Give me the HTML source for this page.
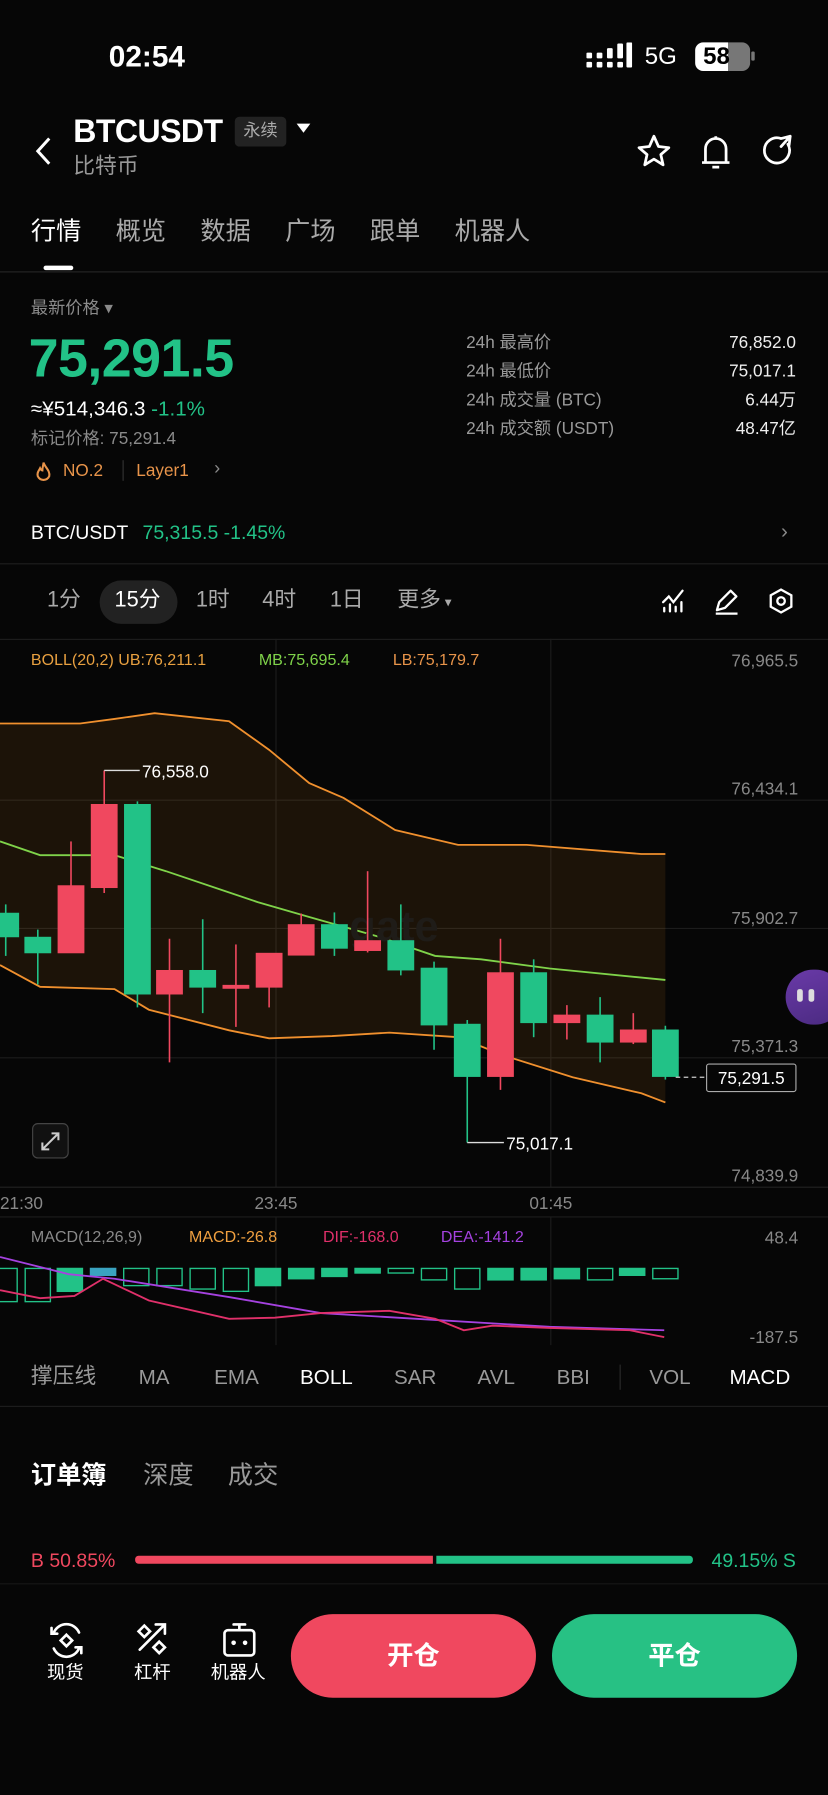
<!DOCTYPE html>
<html><head><meta charset="utf-8"><style>
*{margin:0;padding:0;box-sizing:border-box}
html,body{width:828px;height:1795px;background:#060606;overflow:hidden}
#w{position:absolute;left:0;top:0;width:723px;height:1568px;transform:scale(1.14523,1.1448);transform-origin:0 0;font-family:"Liberation Sans","Noto Sans CJK SC",sans-serif;color:#fff}
.a{position:absolute;white-space:nowrap;line-height:1}
.g{color:#8a8a8a}.gr{color:#22c287}.rd{color:#f0485f}.or{color:#e8944a}
.hl{position:absolute;left:0;width:723px;height:1px;background:#1e1e1e}
</style></head><body><div id="w">
<div class="a" style="left:95px;top:36px;font-size:26px;font-weight:bold">02:54</div>
<svg class="a" style="left:512px;top:37px" width="40" height="24"><g fill="#fff"><rect x="0" y="9" width="5" height="5" rx="1"/><rect x="0" y="17" width="5" height="5" rx="1"/><rect x="9" y="9" width="5" height="5" rx="1"/><rect x="9" y="17" width="5" height="5" rx="1"/><rect x="18" y="5" width="5" height="9" rx="1"/><rect x="18" y="17" width="5" height="5" rx="1"/><rect x="27" y="1" width="5" height="13" rx="1"/><rect x="27" y="17" width="5" height="5" rx="1"/><rect x="35" y="0" width="5" height="22" rx="1"/></g></svg>
<div class="a" style="left:563px;top:39px;font-size:21px">5G</div>
<div class="a" style="left:607px;top:37px;width:48px;height:25px;border-radius:7px;background:linear-gradient(90deg,#fff 0 60%,#777 60%)"></div>
<div class="a" style="left:614px;top:39px;font-size:21px;font-weight:bold;color:#000">58</div>
<div class="a" style="left:656px;top:45px;width:3px;height:8px;background:#777;border-radius:1px"></div>
<svg class="a" style="left:28px;top:118px" width="20" height="28"><path d="M15 3 L5 14 L15 25" stroke="#fff" stroke-width="2.6" fill="none"/></svg>
<div class="a" style="left:64px;top:101px;font-size:28px;font-weight:bold;letter-spacing:-0.5px">BTCUSDT</div>
<div class="a" style="left:205px;top:102px;width:45px;height:26px;background:#222;border-radius:4px;font-size:15px;color:#aaa;text-align:center;line-height:26px">永续</div>
<div class="a" style="left:259px;top:108px;border:6px solid transparent;border-top:8px solid #fff;border-bottom:0"></div>
<div class="a g" style="left:64px;top:136px;font-size:19px;color:#999">比特币</div>
<svg class="a" style="left:556px;top:116px" width="140" height="32"><path d="M15 3 L19 12 L28 13 L21 19 L23 28 L15 23 L7 28 L9 19 L2 13 L11 12Z" stroke="#fff" stroke-width="2.4" fill="none" stroke-linejoin="round"/><path d="M60 26 V14 a9 9 0 0 1 18 0 V26 Z M57 26 H81 M66 30 H72 M69 3 V5" stroke="#fff" stroke-width="2.4" fill="none" stroke-linejoin="round"/><path d="M132 10 A11 11 0 1 1 126 5 M126 5 L134 3 M134 3 L133 11 M134 3 L126 12" stroke="#fff" stroke-width="2.4" fill="none" stroke-linecap="round"/></svg>
<div class="a" style="left:27px;top:191px;font-size:22px">行情</div>
<div class="a g" style="left:101px;top:191px;font-size:22px;color:#aaa">概览</div>
<div class="a" style="left:175px;top:191px;font-size:22px;color:#aaa">数据</div>
<div class="a" style="left:249px;top:191px;font-size:22px;color:#aaa">广场</div>
<div class="a" style="left:323px;top:191px;font-size:22px;color:#aaa">跟单</div>
<div class="a" style="left:397px;top:191px;font-size:22px;color:#aaa">机器人</div>
<div class="a" style="left:38px;top:232px;width:26px;height:4px;background:#fff;border-radius:2px"></div>
<div class="hl" style="top:237px;background:#262626"></div>
<div class="a g" style="left:27px;top:262px;font-size:15px">最新价格 ▾</div>
<div class="a gr" style="left:25px;top:289px;font-size:47px;font-weight:bold;letter-spacing:-0.5px">75,291.5</div>
<div class="a" style="left:27px;top:348px;font-size:18px">≈¥514,346.3 <span class="gr">-1.1%</span></div>
<div class="a g" style="left:27px;top:376px;font-size:15px">标记价格: 75,291.4</div>
<svg class="a" style="left:30px;top:402px" width="16" height="20"><path d="M8 2 C9 6 14 9 13 14 A5.5 5.5 0 0 1 3 14 C2 11 4 9 5 7 C6 9 7 9 7 9 C7 6 8 4 8 2Z" stroke="#e8944a" stroke-width="1.8" fill="none"/></svg>
<div class="a or" style="left:55px;top:404px;font-size:15px">NO.2</div>
<div class="a" style="left:107px;top:402px;width:1px;height:18px;background:#333"></div>
<div class="a or" style="left:119px;top:404px;font-size:15px">Layer1</div>
<div class="a g" style="left:187px;top:402px;font-size:16px">›</div>
<div class="a g" style="left:407px;top:287px;font-size:15px;line-height:25px;color:#999">24h 最高价<br>24h 最低价<br>24h 成交量 (BTC)<br>24h 成交额 (USDT)</div>
<div class="a" style="right:28px;top:287px;font-size:15px;line-height:25px;text-align:right;color:#eee">76,852.0<br>75,017.1<br>6.44万<br>48.47亿</div>
<div class="a" style="left:27px;top:457px;font-size:17px">BTC/USDT <span class="gr" style="margin-left:8px">75,315.5 -1.45%</span></div>
<div class="a g" style="left:682px;top:455px;font-size:18px">›</div>
<div class="hl" style="top:492px"></div>
<div class="a" style="left:87px;top:507px;width:68px;height:38px;border-radius:19px;background:#222"></div>
<div class="a" style="left:41px;top:515px;font-size:19px;color:#aaa">1分</div>
<div class="a" style="left:100px;top:515px;font-size:19px">15分</div>
<div class="a" style="left:171px;top:515px;font-size:19px;color:#aaa">1时</div>
<div class="a" style="left:229px;top:515px;font-size:19px;color:#aaa">4时</div>
<div class="a" style="left:288px;top:515px;font-size:19px;color:#aaa">1日</div>
<div class="a" style="left:347px;top:515px;font-size:19px;color:#aaa">更多<span style="font-size:12px"> ▾</span></div>
<svg class="a" style="left:576px;top:512px" width="120" height="28"><path d="M3 14 L8 9 L12 14 L20 4 M4 22 V19 M9 22 V16 M14 22 V18 M19 22 V14" stroke="#fff" stroke-width="2" fill="none" stroke-linecap="round"/><path d="M50 21 L52 14 L62 4 L67 9 L57 19 Z M49 24 H68" stroke="#fff" stroke-width="2" fill="none" stroke-linejoin="round"/><path d="M106 3 L115 8 V18 L106 23 L97 18 V8 Z" stroke="#fff" stroke-width="2" fill="none"/><circle cx="106" cy="13" r="3.3" stroke="#fff" stroke-width="2" fill="none"/></svg>
<div class="hl" style="top:558px"></div>
<svg class="a" style="left:0;top:558px" width="723" height="620" viewBox="0 558 723 620">
<g stroke="#1c1c1c" stroke-width="1"><line x1="0" y1="699" x2="723" y2="699"/><line x1="0" y1="811" x2="723" y2="811"/><line x1="0" y1="924" x2="723" y2="924"/><line x1="241" y1="558" x2="241" y2="1037"/><line x1="481" y1="558" x2="481" y2="1037"/><line x1="241" y1="1063" x2="241" y2="1175"/><line x1="481" y1="1063" x2="481" y2="1175"/></g>
<line x1="0" y1="1037" x2="723" y2="1037" stroke="#222"/>
<line x1="0" y1="1063" x2="723" y2="1063" stroke="#1c1c1c"/>
<path d="M0 632 L70 632 L100 628 L135 623 L200 630 L235 655 L270 684 L300 697 L345 725 L400 738 L460 738 L560 746 L581 746 L581 963 L560 955 L500 941 L440 922 L400 906 L340 902 L290 905 L235 907 L200 900 L130 882 L100 864 L35 862 L0 843 Z" fill="rgba(255,150,30,0.09)"/>
<path d="M0 632 L70 632 L100 628 L135 623 L200 630 L235 655 L270 684 L300 697 L345 725 L400 738 L460 738 L560 746 L581 746" stroke="#f0902e" stroke-width="1.6" fill="none"/>
<path d="M0 735 L35 747 L100 747 L145 761 L225 788 L270 801 L330 818 L380 835 L420 838 L480 846 L581 856" stroke="#7fd34a" stroke-width="1.6" fill="none"/>
<path d="M0 843 L35 862 L100 864 L130 882 L200 900 L235 907 L290 905 L340 902 L400 906 L440 922 L500 941 L560 955 L581 963" stroke="#f0902e" stroke-width="1.6" fill="none"/>
<text x="305" y="822" font-size="38" font-weight="bold" fill="#1f1c18" font-family="Liberation Sans">gate</text>
<g stroke-width="1.4">
<g fill="#22c287" stroke="#22c287"><line x1="5" y1="790" x2="5" y2="835"/><rect x="-6" y="798" width="22" height="20"/>
<line x1="33" y1="812" x2="33" y2="860"/><rect x="22" y="819" width="22" height="13"/>
<line x1="120" y1="700" x2="120" y2="880"/><rect x="109" y="703" width="22" height="165"/>
<line x1="177" y1="803" x2="177" y2="885"/><rect x="166" y="848" width="22" height="14"/>
<line x1="292" y1="797" x2="292" y2="835"/><rect x="281" y="808" width="22" height="20"/>
<line x1="350" y1="790" x2="350" y2="852"/><rect x="339" y="822" width="22" height="25"/>
<line x1="379" y1="840" x2="379" y2="917"/><rect x="368" y="846" width="22" height="49"/>
<line x1="408" y1="891" x2="408" y2="998"/><rect x="397" y="895" width="22" height="45"/>
<line x1="466" y1="838" x2="466" y2="906"/><rect x="455" y="850" width="22" height="43"/>
<line x1="524" y1="871" x2="524" y2="928"/><rect x="513" y="887" width="22" height="23"/>
<line x1="581" y1="896" x2="581" y2="943"/><rect x="570" y="900" width="22" height="40"/></g>
<g fill="#f0485f" stroke="#f0485f"><line x1="62" y1="735" x2="62" y2="832"/><rect x="51" y="774" width="22" height="58"/>
<line x1="91" y1="673" x2="91" y2="780"/><rect x="80" y="703" width="22" height="72"/>
<line x1="148" y1="820" x2="148" y2="928"/><rect x="137" y="848" width="22" height="20"/>
<line x1="206" y1="825" x2="206" y2="897"/><rect x="195" y="861" width="22" height="2"/>
<line x1="235" y1="833" x2="235" y2="880"/><rect x="224" y="833" width="22" height="29"/>
<line x1="263" y1="798" x2="263" y2="834"/><rect x="252" y="808" width="22" height="26"/>
<line x1="321" y1="761" x2="321" y2="832"/><rect x="310" y="822" width="22" height="8"/>
<line x1="437" y1="820" x2="437" y2="952"/><rect x="426" y="850" width="22" height="90"/>
<line x1="495" y1="878" x2="495" y2="908"/><rect x="484" y="887" width="22" height="6"/>
<line x1="553" y1="885" x2="553" y2="912"/><rect x="542" y="900" width="22" height="10"/></g></g>
<path d="M91 673 H122 M408 998 H440" stroke="#ddd" stroke-width="1.2"/>
<text x="124" y="679" font-size="15" fill="#fff" font-family="Liberation Sans">76,558.0</text>
<text x="442" y="1004" font-size="15" fill="#fff" font-family="Liberation Sans">75,017.1</text>
<line x1="590" y1="941" x2="616" y2="941" stroke="#ccc" stroke-dasharray="4 3"/>
<rect x="617" y="929.5" width="78" height="24" rx="2" fill="#060606" stroke="#aaa"/>
<text x="656" y="947" font-size="15" fill="#fff" text-anchor="middle" font-family="Liberation Sans">75,291.5</text>
<g fill="#888" font-size="15" font-family="Liberation Sans" text-anchor="end"><text x="697" y="582">76,965.5</text><text x="697" y="694">76,434.1</text><text x="697" y="807">75,902.7</text><text x="697" y="919">75,371.3</text><text x="697" y="1032">74,839.9</text><text x="697" y="1086">48.4</text><text x="697" y="1173">-187.5</text></g>
<g fill="#888" font-size="15" font-family="Liberation Sans"><text x="0" y="1056">21:30</text><text x="241" y="1056" text-anchor="middle">23:45</text><text x="481" y="1056" text-anchor="middle">01:45</text></g>
<g stroke="#22c287" stroke-width="1.2"><g fill="none"><rect x="-7" y="1108" width="22" height="29"/><rect x="22" y="1108" width="22" height="29"/><rect x="108" y="1108" width="22" height="15"/><rect x="137" y="1108" width="22" height="15"/><rect x="166" y="1108" width="22" height="18"/><rect x="195" y="1108" width="22" height="20"/><rect x="339" y="1108" width="22" height="4"/><rect x="368" y="1108" width="22" height="10"/><rect x="397" y="1108" width="22" height="18"/><rect x="513" y="1108" width="22" height="10"/><rect x="570" y="1108" width="22" height="9"/></g>
<g fill="#22c287"><rect x="50" y="1108" width="22" height="20"/><rect x="79" y="1108" width="22" height="6" fill="#3aa3c0" stroke="#3aa3c0"/><rect x="223" y="1108" width="22" height="15"/><rect x="252" y="1108" width="22" height="9"/><rect x="281" y="1108" width="22" height="7"/><rect x="310" y="1108" width="22" height="4"/><rect x="426" y="1108" width="22" height="10"/><rect x="455" y="1108" width="22" height="10"/><rect x="484" y="1108" width="22" height="9"/><rect x="541" y="1108" width="22" height="6"/></g></g>
<path d="M0 1098 L60 1113 L100 1117 L200 1133 L280 1147 L380 1153 L480 1159 L580 1162" stroke="#a542e0" stroke-width="1.6" fill="none"/>
<path d="M0 1127 L35 1134 L65 1132 L90 1117 L130 1136 L200 1152 L240 1151 L280 1147 L340 1145 L380 1152 L405 1162 L430 1158 L480 1160 L550 1162 L580 1168" stroke="#e0306a" stroke-width="1.6" fill="none"/>
</svg>
<div class="a" style="left:0;top:569px;font-size:14px"><span class="or" style="color:#e8a040;position:absolute;left:27px">BOLL(20,2) UB:76,211.1</span><span style="color:#7fd34a;position:absolute;left:226px">MB:75,695.4</span><span class="or" style="position:absolute;left:343px">LB:75,179.7</span></div>
<div class="a" style="left:28px;top:981px;width:32px;height:31px;border:1px solid #444;border-radius:5px;background:#111"></div>
<svg class="a" style="left:34px;top:987px" width="20" height="20"><path d="M3 17 L17 3 M11 3 H17 V9 M3 11 V17 H9" stroke="#ccc" stroke-width="1.8" fill="none"/></svg>
<div class="a" style="left:686px;top:847px;width:50px;height:48px;border-radius:24px;background:linear-gradient(160deg,#6a3aa8,#4a2a80)"></div>
<div class="a" style="left:696px;top:864px;width:5px;height:11px;background:#ddd;border-radius:2px"></div>
<div class="a" style="left:706px;top:864px;width:5px;height:11px;background:#ddd;border-radius:2px"></div>
<div class="a" style="left:27px;top:1073px;font-size:14px"><span class="g">MACD(12,26,9)</span><span class="or" style="position:absolute;left:138px;color:#f0a040">MACD:-26.8</span><span style="position:absolute;left:255px;color:#e0306a">DIF:-168.0</span><span style="position:absolute;left:358px;color:#a542e0">DEA:-141.2</span></div>
<div class="a" style="left:27px;top:1193px;font-size:19px;color:#999">撑压线</div>
<div class="a" style="left:121px;top:1194px;font-size:18px;color:#999">MA</div>
<div class="a" style="left:187px;top:1194px;font-size:18px;color:#999">EMA</div>
<div class="a" style="left:262px;top:1194px;font-size:18px">BOLL</div>
<div class="a" style="left:344px;top:1194px;font-size:18px;color:#999">SAR</div>
<div class="a" style="left:417px;top:1194px;font-size:18px;color:#999">AVL</div>
<div class="a" style="left:486px;top:1194px;font-size:18px;color:#999">BBI</div>
<div class="a" style="left:541px;top:1192px;width:1px;height:22px;background:#2a2a2a"></div>
<div class="a" style="left:567px;top:1194px;font-size:18px;color:#999">VOL</div>
<div class="a" style="left:637px;top:1194px;font-size:18px">MACD</div>
<div class="hl" style="top:1228px"></div>
<div class="a" style="left:27px;top:1278px;font-size:22px;font-weight:bold">订单簿</div>
<div class="a" style="left:125px;top:1278px;font-size:22px;color:#999">深度</div>
<div class="a" style="left:199px;top:1278px;font-size:22px;color:#999">成交</div>
<div class="a rd" style="left:27px;top:1355px;font-size:17px">B 50.85%</div>
<div class="a" style="left:118px;top:1359px;width:260px;height:7px;background:#f0485f;border-radius:3px 0 0 3px"></div>
<div class="a" style="left:381px;top:1359px;width:224px;height:7px;background:#22c287;border-radius:0 3px 3px 0"></div>
<div class="a gr" style="right:28px;top:1355px;font-size:17px">49.15% S</div>
<div class="hl" style="top:1383px;background:#161616"></div>
<svg class="a" style="left:40px;top:1416px" width="200" height="34"><g stroke="#fff" stroke-width="2.3" fill="none" stroke-linecap="round"><path d="M7 10 A12 12 0 0 1 29 10 M29 24 A12 12 0 0 1 7 24 M5 6 V11 H10 M31 28 V23 H26"/><path d="M18 12 L23 17 L18 22 L13 17 Z"/><path d="M82 25 L104 3 M96 3 H104 V11"/><path d="M86 4 L91 9 L86 14 L81 9 Z M99 18 L104 23 L99 28 L94 23 Z"/><rect x="156" y="8" width="26" height="22" rx="3"/><path d="M169 8 V3 M164 3 H174"/></g><circle cx="164" cy="19" r="2" fill="#fff"/><circle cx="174" cy="19" r="2" fill="#fff"/></svg>
<div class="a" style="left:41px;top:1454px;font-size:16px">现货</div>
<div class="a" style="left:117px;top:1454px;font-size:16px">杠杆</div>
<div class="a" style="left:184px;top:1454px;font-size:16px">机器人</div>
<div class="a" style="left:254px;top:1410px;width:214px;height:73px;border-radius:37px;background:#f0485f;font-size:23px;font-weight:bold;text-align:center;line-height:73px">开仓</div>
<div class="a" style="left:482px;top:1410px;width:214px;height:73px;border-radius:37px;background:#27c184;font-size:23px;font-weight:bold;text-align:center;line-height:73px">平仓</div>
</div></body></html>
